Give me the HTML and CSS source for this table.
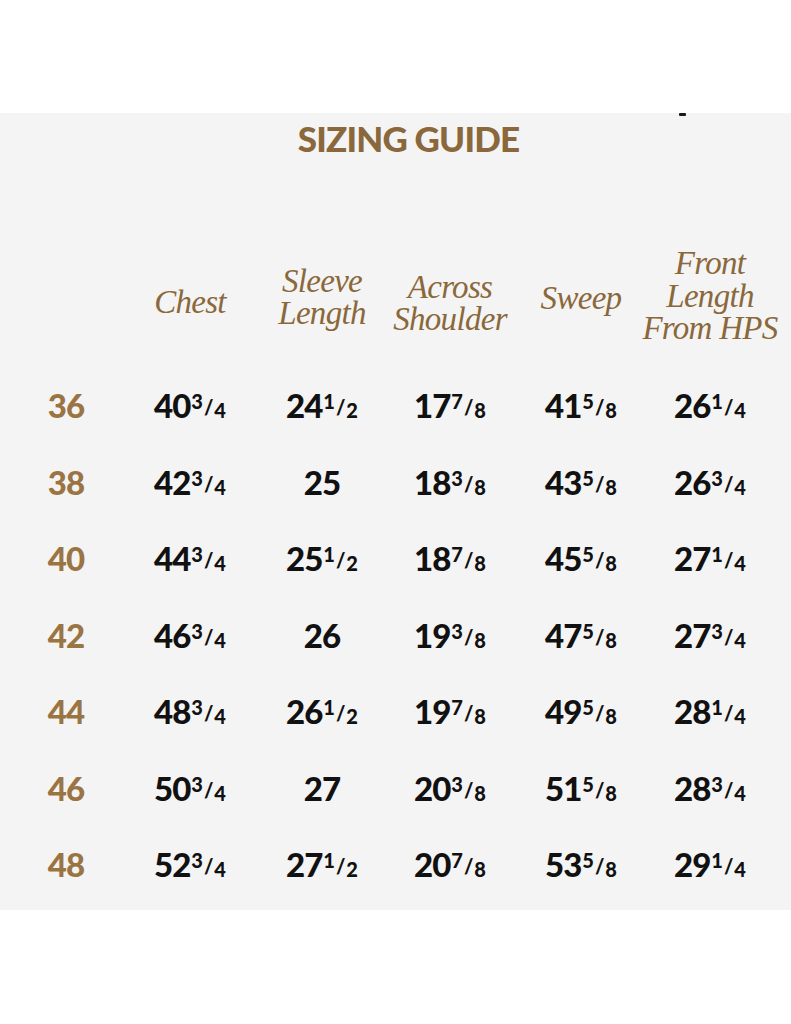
FILE: index.html
```html
<!DOCTYPE html>
<html lang="en">
<head>
<meta charset="utf-8">
<title>Sizing Guide</title>
<link rel="stylesheet" href="styles.css">
</head>
<body>
<div class="top-space"></div>
<section class="panel">
  <span class="mark"></span>
  <h1 class="title">SIZING GUIDE</h1>
  <div class="grid head">
    <div class="cell"></div>
    <div class="cell hd hd-chest">Chest</div>
    <div class="cell hd hd-sleeve">Sleeve<br>Length</div>
    <div class="cell hd hd-across">Across<br>Shoulder</div>
    <div class="cell hd hd-sweep">Sweep</div>
    <div class="cell hd hd-front">Front<br>Length<br>From HPS</div>
  </div>

  <div class="grid row">
    <div class="size">36</div>
    <div class="val">40<span class="n">3</span><span class="s">/</span><span class="d">4</span></div>
    <div class="val">24<span class="n">1</span><span class="s">/</span><span class="d">2</span></div>
    <div class="val">17<span class="n">7</span><span class="s">/</span><span class="d">8</span></div>
    <div class="val">41<span class="n">5</span><span class="s">/</span><span class="d">8</span></div>
    <div class="val">26<span class="n">1</span><span class="s">/</span><span class="d">4</span></div>
  </div>
  <div class="grid row">
    <div class="size">38</div>
    <div class="val">42<span class="n">3</span><span class="s">/</span><span class="d">4</span></div>
    <div class="val">25</div>
    <div class="val">18<span class="n">3</span><span class="s">/</span><span class="d">8</span></div>
    <div class="val">43<span class="n">5</span><span class="s">/</span><span class="d">8</span></div>
    <div class="val">26<span class="n">3</span><span class="s">/</span><span class="d">4</span></div>
  </div>
  <div class="grid row">
    <div class="size">40</div>
    <div class="val">44<span class="n">3</span><span class="s">/</span><span class="d">4</span></div>
    <div class="val">25<span class="n">1</span><span class="s">/</span><span class="d">2</span></div>
    <div class="val">18<span class="n">7</span><span class="s">/</span><span class="d">8</span></div>
    <div class="val">45<span class="n">5</span><span class="s">/</span><span class="d">8</span></div>
    <div class="val">27<span class="n">1</span><span class="s">/</span><span class="d">4</span></div>
  </div>
  <div class="grid row">
    <div class="size">42</div>
    <div class="val">46<span class="n">3</span><span class="s">/</span><span class="d">4</span></div>
    <div class="val">26</div>
    <div class="val">19<span class="n">3</span><span class="s">/</span><span class="d">8</span></div>
    <div class="val">47<span class="n">5</span><span class="s">/</span><span class="d">8</span></div>
    <div class="val">27<span class="n">3</span><span class="s">/</span><span class="d">4</span></div>
  </div>
  <div class="grid row">
    <div class="size">44</div>
    <div class="val">48<span class="n">3</span><span class="s">/</span><span class="d">4</span></div>
    <div class="val">26<span class="n">1</span><span class="s">/</span><span class="d">2</span></div>
    <div class="val">19<span class="n">7</span><span class="s">/</span><span class="d">8</span></div>
    <div class="val">49<span class="n">5</span><span class="s">/</span><span class="d">8</span></div>
    <div class="val">28<span class="n">1</span><span class="s">/</span><span class="d">4</span></div>
  </div>
  <div class="grid row">
    <div class="size">46</div>
    <div class="val">50<span class="n">3</span><span class="s">/</span><span class="d">4</span></div>
    <div class="val">27</div>
    <div class="val">20<span class="n">3</span><span class="s">/</span><span class="d">8</span></div>
    <div class="val">51<span class="n">5</span><span class="s">/</span><span class="d">8</span></div>
    <div class="val">28<span class="n">3</span><span class="s">/</span><span class="d">4</span></div>
  </div>
  <div class="grid row">
    <div class="size">48</div>
    <div class="val">52<span class="n">3</span><span class="s">/</span><span class="d">4</span></div>
    <div class="val">27<span class="n">1</span><span class="s">/</span><span class="d">2</span></div>
    <div class="val">20<span class="n">7</span><span class="s">/</span><span class="d">8</span></div>
    <div class="val">53<span class="n">5</span><span class="s">/</span><span class="d">8</span></div>
    <div class="val">29<span class="n">1</span><span class="s">/</span><span class="d">4</span></div>
  </div>
</section>
</body>
</html>
```

FILE: styles.css
```css
html, body {
  margin: 0;
  padding: 0;
  background: #ffffff;
}

body {
  width: 791px;
  height: 1024px;
  overflow: hidden;
  font-family: "Lato", "Liberation Sans", sans-serif;
}

.top-space {
  height: 113px;
}

.panel {
  position: relative;
  background: #f4f4f4;
  height: 797px;
  box-sizing: border-box;
}

.mark {
  position: absolute;
  left: 679px;
  top: 0px;
  width: 7px;
  height: 3px;
  background: #1a1a1a;
  border-radius: 1px;
}

.title {
  margin: 0;
  height: 48px;
  line-height: 50px;
  text-align: center;
  font-family: "Lato", "Liberation Sans", sans-serif;
  font-weight: 900;
  font-size: 35px;
  letter-spacing: -0.8px;
  color: #8a683b;
  padding-left: 26px;
}

.grid {
  display: grid;
  grid-template-columns: 132px 116px 148px 108px 154px 104px;
}

.cell {
  display: flex;
  align-items: center;
  justify-content: center;
  text-align: center;
  white-space: nowrap;
}

.head {
  margin-top: 84px;
  height: 110px;
}

.hd {
  font-family: "Liberation Serif", "Times New Roman", serif;
  font-style: italic;
  font-size: 33px;
  line-height: 32.5px;
  color: #8a683b;
  letter-spacing: -0.7px;
}

.hd-chest { padding-top: 4px; }
.hd-sleeve { padding-bottom: 6px; }
.hd-across { padding-top: 6px; }
.hd-sweep { padding-bottom: 4px; }
.hd-front { padding-bottom: 8px; }

.row {
  height: 76.5px;
}

.head + .row {
  margin-top: 12px;
}

.size, .val {
  text-align: center;
  white-space: nowrap;
  line-height: 76.5px;
  font-weight: 900;
  font-size: 33px;
  letter-spacing: -1px;
}

.size {
  color: #9a7443;
}

.val {
  color: #111111;
}

.n, .s, .d {
  font-size: 20px;
  line-height: 1;
  font-weight: 900;
  letter-spacing: 0;
}

.n {
  vertical-align: 9px;
  margin-left: 1px;
}

.s {
  vertical-align: 3px;
  margin: 0 1px;
}

.d {
  vertical-align: 0;
}
```
